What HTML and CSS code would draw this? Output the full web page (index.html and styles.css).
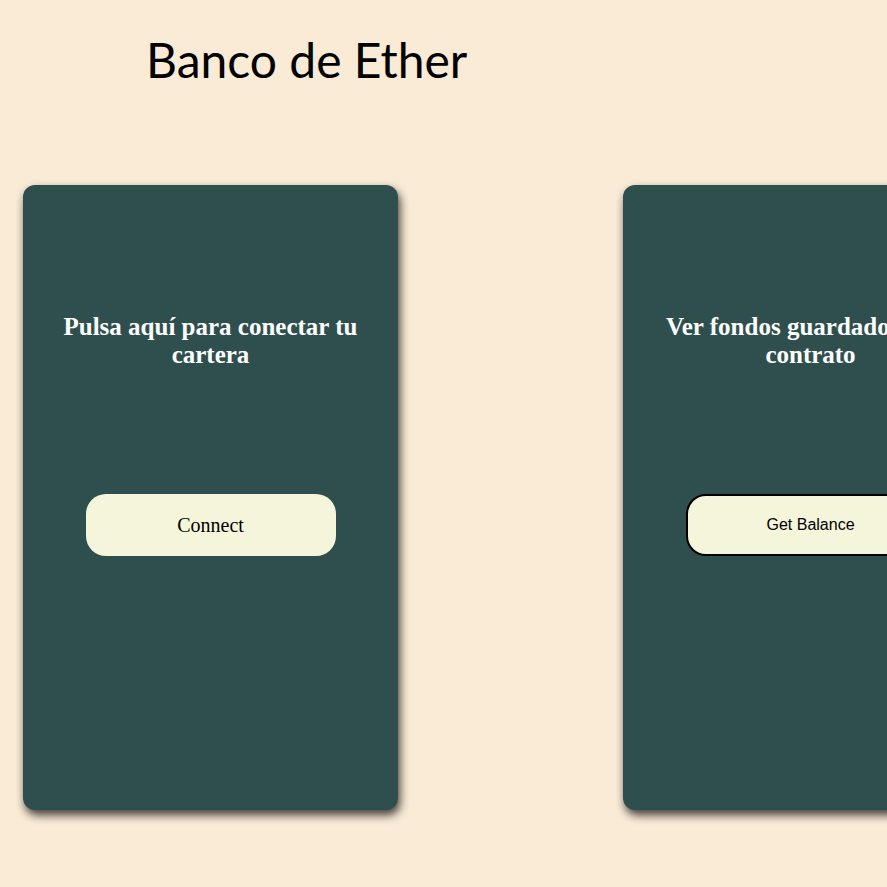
FILE: index.html
```html
<!DOCTYPE html>
<html lang="es">
<head>
<meta charset="utf-8">
<title>Banco de Ether</title>
<link rel="stylesheet" href="styles.css">
</head>
<body>
<header class="header">
  <h1 class="title">Banco de Ether</h1>
</header>
<main class="cards">
  <section class="card">
    <h2 class="card-title">Pulsa aquí para conectar tu cartera</h2>
    <button class="btn btn-connect">Connect</button>
  </section>
  <section class="card">
    <h2 class="card-title">Ver fondos guardados en el contrato</h2>
    <button class="btn btn-balance">Get Balance</button>
  </section>
</main>
</body>
</html>
```

FILE: styles.css
```css
html, body {
  margin: 0;
  padding: 0;
}
body {
  background: #FAEBD7;
  width: 887px;
  height: 887px;
  overflow: hidden;
  font-family: "Liberation Serif", "Times New Roman", serif;
}
.header {
  padding: 31px 0 0 146px;
  height: 185px;
  box-sizing: border-box;
}
.title {
  margin: 0;
  font-family: Lato, sans-serif;
  font-weight: 400;
  font-size: 48px;
  line-height: 57.6px;
  color: #000;
  white-space: nowrap;
}
.cards {
  display: flex;
  gap: 225px;
  padding-left: 23px;
}
.card {
  flex: 0 0 375px;
  height: 625px;
  box-sizing: border-box;
  background: #2F4F4F;
  border-radius: 12px;
  box-shadow: 2px 5px 10px rgba(0, 0, 0, 0.75);
  display: flex;
  flex-direction: column;
  align-items: center;
  padding: 128px 30px 0;
  gap: 125px;
}
.card-title {
  margin: 0;
  font-family: "Liberation Serif", "Times New Roman", serif;
  font-weight: 700;
  font-size: 25px;
  line-height: 28px;
  color: #fff;
  text-align: center;
}
.btn {
  flex: 0 0 auto;
  width: 250px;
  height: 62px;
  box-sizing: border-box;
  background: #F5F5DC;
  border-radius: 20px;
  color: #000;
  cursor: pointer;
}
.btn-connect {
  border: none;
  font-family: "Liberation Serif", "Times New Roman", serif;
  font-size: 20px;
  padding-top: 2px;
}
.btn-balance {
  border: 2px solid #000;
  font-family: "Liberation Sans", Arial, sans-serif;
  font-size: 16px;
  flex-shrink: 0;
}
```
